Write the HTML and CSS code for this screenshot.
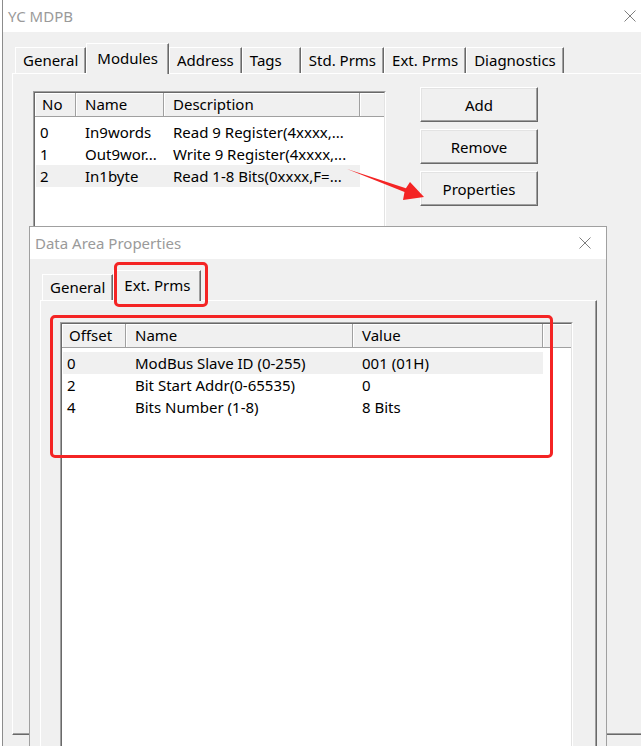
FILE: index.html
```html
<!DOCTYPE html>
<html>
<head>
<meta charset="utf-8">
<title>YC MDPB</title>
<link rel="stylesheet" href="styles.css">
</head>
<body>
<div class="screen">
  <div class="window">
    <div class="titlebar">
      <span class="title">YC MDPB</span>
      <svg class="close" width="12" height="12" viewBox="0 0 12 12"><path d="M0.5 0.5 L11.5 11.5 M11.5 0.5 L0.5 11.5"/></svg>
    </div>
    <div class="client">
      <div class="tabs">
        <div class="tab">General</div>
        <div class="tab active">Modules</div>
        <div class="tab">Address</div>
        <div class="tab">Tags</div>
        <div class="tab">Std. Prms</div>
        <div class="tab">Ext. Prms</div>
        <div class="tab">Diagnostics</div>
      </div>
      <div class="panel outer-panel">
        <div class="listview lv-modules">
          <div class="lv-frame">
            <div class="lv-head">
              <div class="lv-h">No</div>
              <div class="lv-h">Name</div>
              <div class="lv-h">Description</div>
              <div class="lv-h"></div>
            </div>
            <div class="lv-body">
              <div class="lv-row"><span>0</span><span>In9words</span><span>Read 9 Register(4xxxx,...</span></div>
              <div class="lv-row"><span>1</span><span>Out9wor...</span><span>Write 9 Register(4xxxx,...</span></div>
              <div class="lv-row sel"><span>2</span><span>In1byte</span><span>Read 1-8 Bits(0xxxx,F=...</span></div>
            </div>
          </div>
        </div>
        <div class="buttons">
          <button class="btn">Add</button>
          <button class="btn">Remove</button>
          <button class="btn">Properties</button>
        </div>
      </div>
    </div>

    <div class="dialog">
      <div class="titlebar dlg-titlebar">
        <span class="title">Data Area Properties</span>
        <svg class="close" width="12" height="12" viewBox="0 0 12 12"><path d="M0.5 0.5 L11.5 11.5 M11.5 0.5 L0.5 11.5"/></svg>
      </div>
      <div class="dlg-body">
        <div class="tabs dlg-tabs">
          <div class="tab">General</div>
          <div class="tab active">Ext. Prms</div>
        </div>
        <div class="panel inner-panel">
          <div class="listview lv-params">
            <div class="lv-frame">
              <div class="lv-head">
                <div class="lv-h">Offset</div>
                <div class="lv-h">Name</div>
                <div class="lv-h">Value</div>
                <div class="lv-h"></div>
              </div>
              <div class="lv-body">
                <div class="lv-row sel"><span>0</span><span>ModBus Slave ID (0-255)</span><span>001 (01H)</span></div>
                <div class="lv-row"><span>2</span><span>Bit Start Addr(0-65535)</span><span>0</span></div>
                <div class="lv-row"><span>4</span><span>Bits Number (1-8)</span><span>8 Bits</span></div>
              </div>
            </div>
          </div>
        </div>
      </div>
    </div>

    <div class="mark mark-tab"></div>
    <div class="mark mark-list"></div>
    <svg class="arrow" width="90" height="50" viewBox="0 0 90 50">
      <polygon points="7,9 65.9,28.3 70,22 84,37 63,40 64.5,32.1"/>
    </svg>
  </div>
</div>
</body>
</html>
```

FILE: styles.css
```css
* { box-sizing: border-box; }

html, body {
  margin: 0;
  padding: 0;
  background: #fff;
}

body {
  font-family: "Noto Sans", "Open Sans", sans-serif;
  font-size: 15px;
  color: #000;
}

.screen {
  width: 641px;
  height: 746px;
  padding-left: 2px;
  overflow: hidden;
  background: #fff;
}

.window {
  position: relative;
  height: 746px;
  border-left: 1px solid #8c8c8c;
  display: flex;
  flex-direction: column;
  overflow: hidden;
}

.titlebar {
  flex: none;
  height: 32px;
  background: #fff;
  display: flex;
  align-items: center;
  justify-content: space-between;
  padding: 0 5px 0 5px;
}

.title {
  color: #9a9a9a;
  white-space: nowrap;
}

.close {
  stroke: #7e7e7e;
  stroke-width: 1;
  fill: none;
}

.client {
  flex: 1;
  background: #f0f0f0;
  padding: 11px 0 0 9px;
}

.tabs {
  position: relative;
  z-index: 1;
  display: flex;
  align-items: flex-end;
  height: 30px;
  margin-left: 3px;
}

.tab {
  height: 26px;
  line-height: 24px;
  min-width: 59px;
  padding: 0 7px;
  background: #f0f0f0;
  border-top: 1px solid #fff;
  border-left: 1px solid #fff;
  border-right: 1px solid #696969;
  box-shadow: inset -1px 0 #a0a0a0;
  white-space: nowrap;
}

.tab.active {
  height: 31px;
  line-height: 28px;
  margin-bottom: -1px;
  padding: 0 10px;
}

.panel {
  background: #f0f0f0;
  border-top: 1px solid #fff;
  border-left: 1px solid #fff;
  border-right: 1px solid #696969;
  border-bottom: 1px solid #696969;
  box-shadow: inset -1px -1px #a0a0a0;
}

.outer-panel {
  height: 662px;
  margin-right: -12px;
  display: flex;
  align-items: flex-start;
  gap: 34px;
  padding: 13px 0 0 20px;
}

/* list views */
.listview {
  flex: none;
  background: #fff;
  border-top: 1px solid #a0a0a0;
  border-left: 1px solid #a0a0a0;
  border-right: 1px solid #fff;
  border-bottom: 1px solid #fff;
}

.lv-frame {
  height: 100%;
  border-top: 1px solid #696969;
  border-left: 1px solid #696969;
  border-right: 1px solid #e3e3e3;
  border-bottom: 1px solid #e3e3e3;
  overflow: hidden;
}

.lv-modules {
  --c1: 41px;
  --c2: 88px;
  --c3: 196px;
  width: 353px;
  height: 300px;
  margin-top: 4px;
}

.lv-params {
  --c1: 64px;
  --c2: 227px;
  --c3: 190px;
  width: 513px;
  height: 520px;
}

.lv-head {
  display: grid;
  grid-template-columns: var(--c1) var(--c2) var(--c3) 1fr;
  height: 24px;
  background: #f0f0f0;
}

.lv-h {
  line-height: 23px;
  padding-left: 9px;
  background: #f0f0f0;
  border-right: 1px solid #a0a0a0;
  border-bottom: 1px solid #a0a0a0;
  box-shadow: inset 1px 1px #fff;
  white-space: nowrap;
}

.lv-h:first-child {
  padding-left: 7px;
}

.lv-h:last-child {
  border-right: none;
}

.lv-body {
  padding-top: 4px;
}

.lv-row {
  display: grid;
  grid-template-columns: calc(var(--c1) - 1px) var(--c2) var(--c3);
  width: calc(var(--c1) + var(--c2) + var(--c3) - 1px);
  margin-left: 1px;
  height: 22px;
  line-height: 22px;
}

.lv-row.sel {
  background: #f0f0f0;
}

.lv-row span {
  padding-left: 9px;
  white-space: nowrap;
  overflow: hidden;
}

.lv-row span:first-child {
  padding-left: 4px;
}

/* buttons */
.buttons {
  display: flex;
  flex-direction: column;
  gap: 7px;
}

.btn {
  width: 118px;
  height: 35px;
  padding: 0;
  font: inherit;
  color: #000;
  background: #f0f0f0;
  border-top: 1px solid #fff;
  border-left: 1px solid #fff;
  border-right: 1px solid #696969;
  border-bottom: 1px solid #696969;
  box-shadow: inset -1px -1px #a0a0a0, inset 1px 1px #e3e3e3;
  border-radius: 0;
}

/* inner dialog (overlapping window) */
.dialog {
  position: absolute;
  left: 26px;
  top: 226px;
  width: 578px;
  height: 540px;
  border: 1px solid #a0a0a0;
  background: #f0f0f0;
  display: flex;
  flex-direction: column;
  z-index: 2;
}

.dlg-titlebar {
  padding: 0 15px 0 5px;
}

.dlg-body {
  flex: 1;
  padding: 11px 9px 0 10px;
}

.dlg-tabs {
  margin-left: 2px;
}

.inner-panel {
  height: 480px;
  padding: 21px 0 0 19px;
}

/* annotations */
.mark {
  position: absolute;
  z-index: 3;
  border: 3px solid #f42424;
  border-radius: 5px;
}

.mark-tab {
  left: 111px;
  top: 262px;
  width: 94px;
  height: 45px;
}

.mark-list {
  left: 47px;
  top: 315px;
  width: 503px;
  height: 143px;
}

.arrow {
  position: absolute;
  z-index: 3;
  left: 337px;
  top: 160px;
  fill: #f42424;
}
```
